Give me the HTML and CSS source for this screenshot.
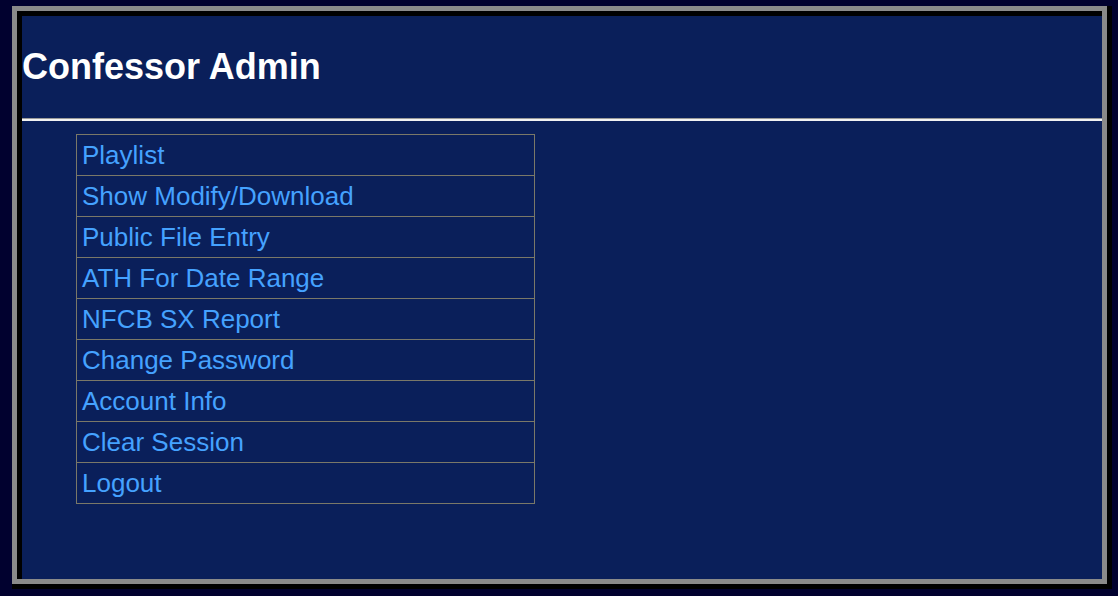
FILE: index.html
```html
<!DOCTYPE html>
<html>
<head>
<meta charset="utf-8">
<title>Confessor Admin</title>
<link rel="stylesheet" href="styles.css">
</head>
<body>
<div class="shadow">
  <div class="frame">
    <div class="panel">
      <h1 class="title">Confessor Admin</h1>
      <hr class="rule">
      <table class="menu">
        <tr><td><a href="#">Playlist</a></td></tr>
        <tr><td><a href="#">Show Modify/Download</a></td></tr>
        <tr><td><a href="#">Public File Entry</a></td></tr>
        <tr><td><a href="#">ATH For Date Range</a></td></tr>
        <tr><td><a href="#">NFCB SX Report</a></td></tr>
        <tr><td><a href="#">Change Password</a></td></tr>
        <tr><td><a href="#">Account Info</a></td></tr>
        <tr><td><a href="#">Clear Session</a></td></tr>
        <tr><td><a href="#">Logout</a></td></tr>
      </table>
    </div>
  </div>
</div>
</body>
</html>
```

FILE: styles.css
```css
html, body {
  margin: 0;
  padding: 0;
  background: #01012f;
  font-family: "Liberation Sans", Arial, Helvetica, sans-serif;
}

body {
  padding: 6px 0 0 12px;
  height: 596px;
  box-sizing: border-box;
  overflow: hidden;
}

.shadow {
  width: 1100px;
  height: 583px;
  background: #000;
  box-sizing: border-box;
  padding: 0 5px 5px 0;
}

.frame {
  width: 1095px;
  height: 578px;
  box-sizing: border-box;
  border: 5px solid #8a8a8a;
}

.panel {
  height: 100%;
  box-sizing: border-box;
  border-top: 5px solid #000;
  border-left: 5px solid #000;
  background: #0a1f5a;
  display: flex;
  flex-direction: column;
  align-items: flex-start;
}

.title {
  margin: 30px 0 0 0;
  font-size: 36px;
  line-height: 42px;
  font-weight: bold;
  color: #fff;
}

.rule {
  align-self: stretch;
  margin: 30px 0 0 0;
  height: 0;
  border: 0;
  border-top: 1px solid #9a9a9a;
  border-bottom: 2px solid #f2f2f2;
}

.menu {
  margin: 13px 0 0 54px;
  border-collapse: collapse;
  width: 459px;
}

.menu td {
  border: 1px solid #7a7868;
  height: 40px;
  padding: 0 5px;
  line-height: 40px;
  font-size: 26px;
  box-sizing: border-box;
}

.menu a {
  color: #45a2ff;
  text-decoration: none;
}
```
